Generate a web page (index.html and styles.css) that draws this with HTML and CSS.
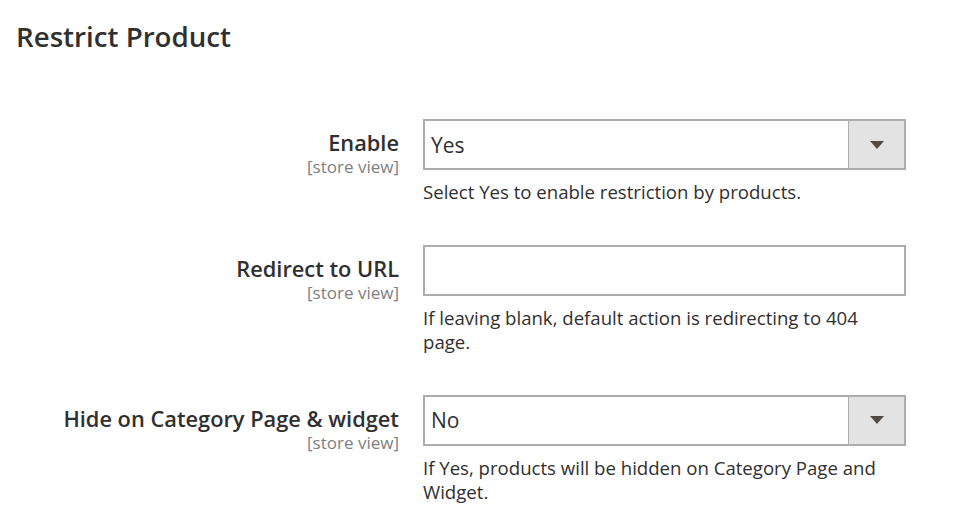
FILE: index.html
```html
<!DOCTYPE html>
<html>
<head>
<meta charset="utf-8">
<link rel="stylesheet" href="styles.css">
</head>
<body>
<div class="page">
  <h1 class="title">Restrict Product</h1>
  <div class="form">
    <div class="row">
      <div class="label">
        <span class="label-text">Enable</span>
        <span class="scope">[store view]</span>
      </div>
      <div class="control">
        <div class="select">
          <span class="select-value">Yes</span>
          <span class="select-btn"><span class="arrow"></span></span>
        </div>
        <p class="note">Select Yes to enable restriction by products.</p>
      </div>
    </div>
    <div class="row">
      <div class="label">
        <span class="label-text">Redirect to URL</span>
        <span class="scope">[store view]</span>
      </div>
      <div class="control">
        <div class="input"></div>
        <p class="note">If leaving blank, default action is redirecting to 404 page.</p>
      </div>
    </div>
    <div class="row">
      <div class="label">
        <span class="label-text">Hide on Category Page &amp; widget</span>
        <span class="scope">[store view]</span>
      </div>
      <div class="control">
        <div class="select">
          <span class="select-value">No</span>
          <span class="select-btn"><span class="arrow"></span></span>
        </div>
        <p class="note">If Yes, products will be hidden on Category Page and Widget.</p>
      </div>
    </div>
  </div>
</div>
</body>
</html>
```

FILE: styles.css
```css
* { box-sizing: border-box; }
html, body { margin: 0; padding: 0; background: #fff; }
body {
  font-family: "Open Sans", "Liberation Sans", sans-serif;
  color: #303030;
}
.page {
  padding: 17px 16px 0 16px;
}
.title {
  margin: 0;
  font-size: 27.7px;
  font-weight: 600;
  line-height: 38px;
  color: #303030;
}
.form {
  padding-top: 64px;
  display: flex;
  flex-direction: column;
  gap: 40px;
}
.row {
  display: grid;
  grid-template-columns: 383px 483px;
  column-gap: 24px;
}
.label {
  display: flex;
  flex-direction: column;
  align-items: flex-end;
  text-align: right;
  padding-top: 10px;
}
.label-text {
  font-size: 21.8px;
  font-weight: 600;
  line-height: 28px;
  color: #303030;
}
.scope {
  font-size: 17px;
  line-height: 20px;
  color: #808080;
}
.control { display: flex; flex-direction: column; }
.select, .input {
  height: 51px;
  border: 2px solid #adadad;
  background: #fff;
  display: flex;
  align-items: center;
}
.select-value {
  flex: 1;
  padding-left: 6px;
  font-size: 21px;
  color: #303030;
}
.select-btn {
  width: 56px;
  align-self: stretch;
  background: #e3e3e3;
  border-left: 1px solid #adadad;
  display: flex;
  align-items: center;
  justify-content: center;
}
.arrow {
  width: 0;
  height: 0;
  border-left: 7px solid transparent;
  border-right: 7px solid transparent;
  border-top: 8px solid #514943;
}
.note {
  margin: 10px 0 0 0;
  font-size: 18.6px;
  line-height: 24.5px;
  color: #303030;
}
```
